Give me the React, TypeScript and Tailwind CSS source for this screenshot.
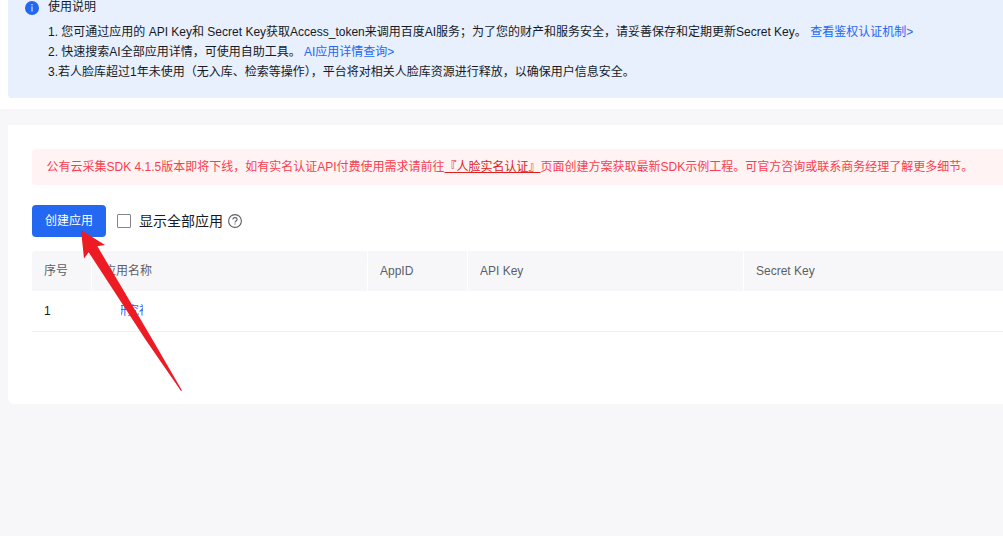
import type { ReactNode } from "react";

const columns = [
  { label: "序号", width: "w-[60px]" },
  { label: "应用名称", width: "w-[276px]" },
  { label: "AppID", width: "w-[100px]" },
  { label: "API Key", width: "w-[276px]" },
  { label: "Secret Key", width: "grow" },
];

function Link({ children }: { children: ReactNode }) {
  return (
    <a href="#" className="text-[#2468f2]">
      {children}
    </a>
  );
}

function UsageNotice() {
  return (
    <section className="h-[109px] bg-white pl-2">
      <div className="flex h-[98px] gap-[9px] rounded-bl-[4px] bg-[#e8effd] pl-[17px] text-[#151b26]">
        <svg className="mt-[1px] size-[14px] shrink-0" viewBox="0 0 14 14">
          <circle cx="7" cy="7" r="7" fill="#2468f2" />
          <rect x="6.4" y="3" width="1.2" height="1.4" fill="#d5e2fd" />
          <rect x="6.4" y="5.5" width="1.2" height="5" fill="#d5e2fd" />
        </svg>
        <div className="-mt-[3px]">
          <h2 className="leading-5">使用说明</h2>
          <div className="mt-[5px] leading-5">
            <p>
              1. 您可通过应用的 API Key和 Secret Key获取Access_token来调用百度AI服务；为了您的财产和服务安全，请妥善保存和定期更新Secret Key。{" "}
              <Link>查看鉴权认证机制&gt;</Link>
            </p>
            <p>
              2. 快速搜索AI全部应用详情，可使用自助工具。 <Link>AI应用详情查询&gt;</Link>
            </p>
            <p>3.若人脸库超过1年未使用（无入库、检索等操作），平台将对相关人脸库资源进行释放，以确保用户信息安全。</p>
          </div>
        </div>
      </div>
    </section>
  );
}

function Toolbar() {
  return (
    <div className="mt-5 flex h-8 items-center">
      <button className="h-8 w-[74px] rounded-[4px] bg-[#2468f2] text-white">创建应用</button>
      <label className="ml-[11px] flex items-center text-sm text-[#151b26]">
        <span className="mr-2 size-[14px] rounded-[1px] border border-[#84868c] bg-white" />
        显示全部应用
      </label>
      <svg className="ml-[5px] size-[14px]" viewBox="0.5 0.5 14 14" fill="none" stroke="#5c5f66" strokeWidth="1.1">
        <circle cx="7.5" cy="7.5" r="6.4" />
        <path d="M5.4 6.1c0-1.2.9-2 2.1-2s2.1.8 2.1 1.9c0 1.5-2.1 1.6-2.1 3" />
        <path d="M7.5 9.9v1.2" />
      </svg>
    </div>
  );
}

function AppTable() {
  return (
    <div className="mt-[14px]">
      <div className="flex h-10 overflow-hidden rounded-tl-[4px] bg-[#f7f7f9] text-[#5c5f66]">
        {columns.map((c, i) => (
          <div
            key={c.label}
            className={`flex shrink-0 items-center pl-3 ${c.width} ${i < columns.length - 1 ? "border-r border-white" : ""}`}
          >
            {c.label}
          </div>
        ))}
      </div>
      <div className="flex h-[41px] items-center border-b border-[#f0f0f1] text-[#151b26]">
        <div className="w-[60px] pl-3">1</div>
        <div className="ml-[29px] flex w-[22px] overflow-hidden whitespace-nowrap">
          <span className="-ml-[6px] shrink-0">
            <Link>研究社</Link>
          </span>
        </div>
      </div>
    </div>
  );
}

export default function App() {
  return (
    <div className="relative h-[536px] w-full overflow-hidden whitespace-nowrap bg-[#f7f7f9] font-['Liberation_Sans','Noto_Sans_CJK_SC',sans-serif] text-xs">
      <UsageNotice />
      <main className="ml-2 mt-4 h-[279px] rounded-bl-[6px] bg-white pl-6 pt-6">
        <div className="flex h-9 items-center rounded-l-[4px] bg-[#fff4f3] pl-[14.5px] text-[#fa3e50]">
          <span>
            公有云采集SDK 4.1.5版本即将下线，如有实名认证API付费使用需求请前往
            <a href="#" className="text-[#e02020] underline">『人脸实名认证』</a>
            页面创建方案获取最新SDK示例工程。可官方咨询或联系商务经理了解更多细节。
          </span>
        </div>
        <Toolbar />
        <AppTable />
      </main>
      <svg className="pointer-events-none absolute left-[80px] top-[229px] h-[163px] w-[104px]" viewBox="80 229 104 163">
        <path d="M81 230 105 245 97.4 246.3 123.3 290 152.7 340 182 390.4 181 391 145.8 340 113.3 290 88.7 252.3 84 258.5Z" fill="#ed1c24" />
      </svg>
    </div>
  );
}
